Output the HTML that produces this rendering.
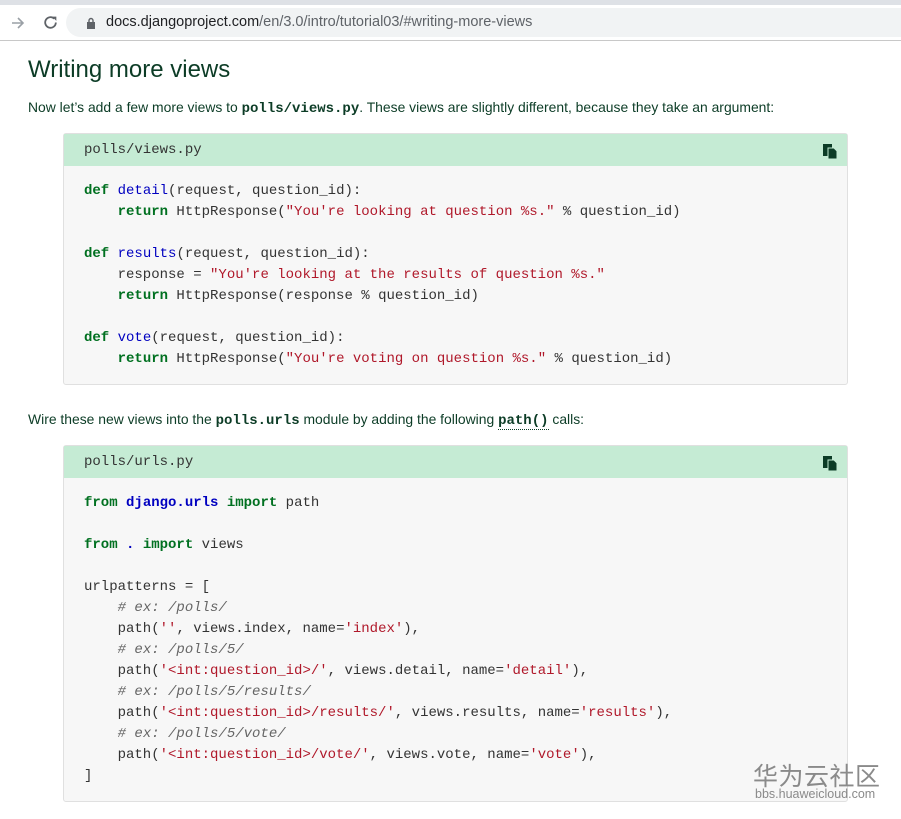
<!DOCTYPE html>
<html><head><meta charset="utf-8"><style>
body{margin:0;width:901px;height:819px;background:#fff;font-family:"Liberation Sans",sans-serif;overflow:hidden;position:relative}
.top{position:absolute;left:0;top:0;width:901px;height:5px;background:#dee1e6}
.bar{position:absolute;left:0;top:5px;width:901px;height:35px;background:#fff;border-bottom:1px solid #c8c8c8}
.url{position:absolute;left:66px;top:3px;width:850px;height:29px;background:#f1f3f4;border-radius:15px}
.url span{position:absolute;left:40px;top:6px;font-size:14.5px;color:#202124}
.url span i{font-style:normal;color:#5f6368}
h1{position:absolute;left:28px;top:56px;margin:0;font-weight:normal;font-size:24px;color:#0c3c26}
p{position:absolute;left:28px;margin:0;font-size:13.9px;color:#0c3c26}
p code{font-family:"Liberation Mono",monospace;font-weight:bold;font-size:14px;color:#0c3c26}
.blk{position:absolute;left:63px;width:783px;border:1px solid #e0e0e0;border-radius:3px;background:#f7f7f7}
.hd{height:32px;background:#c5ebd4;position:relative;font-family:"Liberation Mono",monospace;font-size:14px;color:#333}
.hd span{position:absolute;left:20px;top:8px}
.cp{position:absolute;right:10px;top:10px;width:14px;height:15px}
pre{margin:0;padding:15px 20px 0 20px;font-family:"Liberation Mono",monospace;font-size:14px;line-height:21px;color:#333}
.k{color:#007020;font-weight:bold}.f{color:#0000c0}.s{color:#b0182a}.c{color:#666;font-style:italic}.n{color:#0000c0;font-weight:bold}
</style></head><body>
<div class="top"></div>
<div class="bar">
<svg style="position:absolute;left:10px;top:10px" width="16" height="16" viewBox="0 0 16 16"><path d="M2 8h11M8 3l5 5-5 5" stroke="#9aa0a6" stroke-width="1.6" fill="none"/></svg>
<svg style="position:absolute;left:42px;top:9px" width="17" height="17" viewBox="0 0 16 16"><path d="M13 8a5 5 0 1 1-1.5-3.6" stroke="#5f6368" stroke-width="1.7" fill="none"/><path d="M9.5 2.5h4v4z" fill="#5f6368"/></svg>
<div class="url"><svg style="position:absolute;left:20px;top:9px" width="10" height="12" viewBox="0 0 10 12"><rect x="1" y="5" width="8" height="7" fill="#5f6368"/><path d="M3 5V3.5a2 2 0 0 1 4 0V5" stroke="#5f6368" stroke-width="1.4" fill="none"/></svg><span>docs.djangoproject.com<i>/en/3.0/intro/tutorial03/#writing-more-views</i></span></div>
</div>
<h1>Writing more views</h1>
<p style="top:99px">Now let’s add a few more views to <code>polls/views.py</code>. These views are slightly different, because they take an argument:</p>
<div class="blk" style="top:133px;height:250px">
<div class="hd"><span>polls/views.py</span><svg class="cp" viewBox="0 0 14 15"><rect x="0" y="0" width="9" height="12" fill="#0c3c26"/><path d="M5 4h6l3 3v8H5z" fill="#0c3c26" stroke="#c5ebd4" stroke-width="1"/></svg></div>
<pre><span class="k">def</span> <span class="f">detail</span>(request, question_id):
    <span class="k">return</span> HttpResponse(<span class="s">"You're looking at question %s."</span> % question_id)

<span class="k">def</span> <span class="f">results</span>(request, question_id):
    response = <span class="s">"You're looking at the results of question %s."</span>
    <span class="k">return</span> HttpResponse(response % question_id)

<span class="k">def</span> <span class="f">vote</span>(request, question_id):
    <span class="k">return</span> HttpResponse(<span class="s">"You're voting on question %s."</span> % question_id)</pre>
</div>
<p style="top:411px">Wire these new views into the <code>polls.urls</code> module by adding the following <code style="border-bottom:1px dotted #0c3c26">path()</code> calls:</p>
<div class="blk" style="top:445px;height:355px">
<div class="hd"><span>polls/urls.py</span><svg class="cp" viewBox="0 0 14 15"><rect x="0" y="0" width="9" height="12" fill="#0c3c26"/><path d="M5 4h6l3 3v8H5z" fill="#0c3c26" stroke="#c5ebd4" stroke-width="1"/></svg></div>
<pre><span class="k">from</span> <span class="n">django.urls</span> <span class="k">import</span> path

<span class="k">from</span> <span class="n">.</span> <span class="k">import</span> views

urlpatterns = [
    <span class="c"># ex: /polls/</span>
    path(<span class="s">''</span>, views.index, name=<span class="s">'index'</span>),
    <span class="c"># ex: /polls/5/</span>
    path(<span class="s">'&lt;int:question_id&gt;/'</span>, views.detail, name=<span class="s">'detail'</span>),
    <span class="c"># ex: /polls/5/results/</span>
    path(<span class="s">'&lt;int:question_id&gt;/results/'</span>, views.results, name=<span class="s">'results'</span>),
    <span class="c"># ex: /polls/5/vote/</span>
    path(<span class="s">'&lt;int:question_id&gt;/vote/'</span>, views.vote, name=<span class="s">'vote'</span>),
]</pre>
</div>
<div style="position:absolute;left:753px;top:757px;font-family:'Liberation Sans','Noto Sans CJK SC',sans-serif;font-size:25px;color:#8a8a8a;letter-spacing:0.5px">华为云社区</div>
<div style="position:absolute;left:755px;top:787px;font-size:12.5px;color:#8a8a8a">bbs.huaweicloud.com</div>
</body></html>
